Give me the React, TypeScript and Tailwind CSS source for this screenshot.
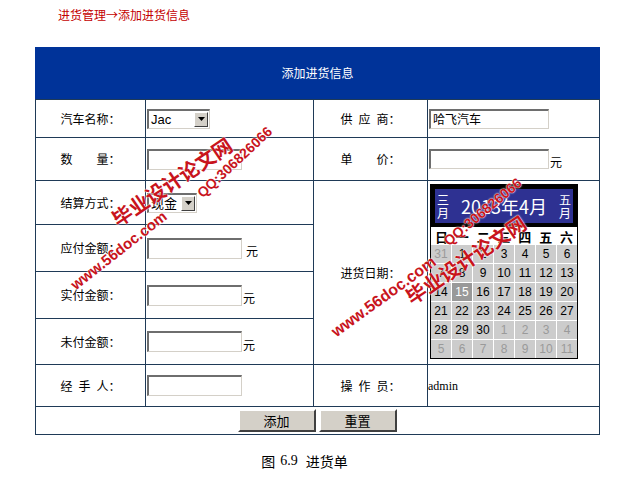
const line = "bg-[#1f3a57]";

function Sunken({ className, children }: { className: string; children?: React.ReactNode }) {
  return (
    <div
      className={
        "flex items-center bg-white border-t-2 border-l-2 border-b border-r border-t-[#6e6e6e] border-l-[#6e6e6e] border-b-[#d4d0c8] border-r-[#d4d0c8] " +
        className
      }
    >
      {children}
    </div>
  );
}

function FakeSelect({ value, className }: { value: string; className: string }) {
  return (
    <Sunken className={"justify-between pr-px " + className}>
      <span className="pl-[2px] text-[13px] leading-none font-['Liberation_Sans','Noto_Sans_CJK_SC',sans-serif]">{value}</span>
      <span className="flex h-[15px] w-[14px] items-center justify-center border border-t-white border-l-white border-b-[#404040] border-r-[#404040] bg-[#d4d0c8]">
        <svg width="7" height="4" viewBox="0 0 7 4">
          <polygon points="0,0 7,0 3.5,4" fill="#000" />
        </svg>
      </span>
    </Sunken>
  );
}

function Label({ text, className = "" }: { text: string; className?: string }) {
  return (
    <div className={"flex items-center justify-center bg-white text-[12px] text-black whitespace-pre " + className}>
      {text}
    </div>
  );
}

const weeks: [number, boolean][][] = [
  [[31, false], [1, true], [2, true], [3, true], [4, true], [5, true], [6, true]],
  [[7, true], [8, true], [9, true], [10, true], [11, true], [12, true], [13, true]],
  [[14, true], [15, true], [16, true], [17, true], [18, true], [19, true], [20, true]],
  [[21, true], [22, true], [23, true], [24, true], [25, true], [26, true], [27, true]],
  [[28, true], [29, true], [30, true], [1, false], [2, false], [3, false], [4, false]],
  [[5, false], [6, false], [7, false], [8, false], [9, false], [10, false], [11, false]],
];

function Calendar() {
  return (
    <div className="w-[148px] border border-black bg-white">
      <div className="flex h-[42px] items-center justify-between border-4 border-black bg-[#2e3192] px-[2px] text-white">
        <div className="flex flex-col text-[12px] leading-[13px]">
          <span>三</span>
          <span>月</span>
        </div>
        <span className="text-[18px] leading-none">2013年4月</span>
        <div className="flex flex-col text-[12px] leading-[13px]">
          <span>五</span>
          <span>月</span>
        </div>
      </div>
      <div className="grid h-[18px] grid-cols-7 items-center text-center text-[13px] font-bold leading-none">
        {["日", "一", "二", "三", "四", "五", "六"].map((d) => (
          <span key={d}>{d}</span>
        ))}
      </div>
      <div className="grid grid-cols-7 gap-px bg-white font-['Liberation_Sans',sans-serif] text-[12px]">
        {weeks.flat().map(([n, cur], i) => {
          const sel = cur && n === 15;
          return (
            <div
              key={i}
              className={
                "flex h-[18px] items-center justify-center " +
                (sel ? "bg-[#999999] text-white" : cur ? "bg-[#cccccc] text-black" : "bg-[#cccccc] text-[#9a9a9a]")
              }
            >
              {n}
            </div>
          );
        })}
      </div>
    </div>
  );
}

function Yuan({ gap = false }: { gap?: boolean }) {
  return <span className={"mt-[6px] text-[12px] leading-none " + (gap ? "ml-[4px]" : "ml-px")}>元</span>;
}

export default function App() {
  return (
    <div className="relative h-[481px] w-[629px] overflow-hidden bg-white font-['Noto_Sans_CJK_SC',sans-serif] text-black">
      <div className="h-[47px] pl-[58px] pt-[8px] text-[12px] leading-[14px] text-[#c40000]">进货管理→添加进货信息</div>

      <div className="ml-[35px] w-[565px]">
        <div className="flex h-[52px] items-center justify-center bg-[#003399] text-[12px] text-white">添加进货信息</div>
        <div
          className={
            "grid grid-cols-[109px_167px_113px_171px] grid-rows-[37px_42px_43px_46px_46px_45px_41px_27px] gap-px p-px " + line
          }
        >
          {/* row 1 */}
          <Label text="汽车名称：" />
          <div className="flex items-center bg-white pl-px">
            <FakeSelect value="Jac" className="h-[20px] w-[63px]" />
          </div>
          <Label text={"供\u2002应\u2002商："} />
          <div className="flex items-center bg-white pl-px">
            <Sunken className="h-[20px] w-[120px] pl-[2px] text-[12px]">哈飞汽车</Sunken>
          </div>

          {/* row 2 */}
          <Label text="数　　量：" />
          <div className="flex items-center bg-white pl-px">
            <Sunken className="h-[21px] w-[95px]" />
          </div>
          <Label text="单　　价：" />
          <div className="flex items-center bg-white pl-px">
            <Sunken className="h-[20px] w-[120px]" />
            <Yuan />
          </div>

          {/* row 3 */}
          <Label text="结算方式：" />
          <div className="flex items-center bg-white pl-px">
            <FakeSelect value="现金" className="h-[20px] w-[50px]" />
          </div>
          <Label text="进货日期：" className="row-span-4" />
          <div className="row-span-4 bg-white pl-[2px] pt-[3px]">
            <Calendar />
          </div>

          {/* row 4 */}
          <Label text="应付金额：" />
          <div className="flex items-center bg-white pl-px">
            <Sunken className="h-[21px] w-[95px]" />
            <Yuan gap />
          </div>

          {/* row 5 */}
          <Label text="实付金额：" />
          <div className="flex items-center bg-white pl-px">
            <Sunken className="h-[21px] w-[95px]" />
            <Yuan />
          </div>

          {/* row 6 */}
          <Label text="未付金额：" />
          <div className="flex items-center bg-white pl-px">
            <Sunken className="h-[21px] w-[95px]" />
            <Yuan />
          </div>

          {/* row 7 */}
          <Label text={"经\u2002手\u2002人："} />
          <div className="flex items-center bg-white pl-px">
            <Sunken className="h-[21px] w-[95px]" />
          </div>
          <Label text={"操\u2002作\u2002员："} />
          <div className="flex items-center bg-white font-['Liberation_Serif',serif] text-[12px]">admin</div>

          {/* row 8 */}
          <div className="col-span-4 flex items-center justify-center gap-[3px] bg-white pr-[1px]">
            <button className="h-[23px] w-[78px] border-2 border-t-white border-l-white border-b-[#404040] border-r-[#404040] bg-[#d4d0c8] text-[13px] leading-none">
              添加
            </button>
            <button className="h-[23px] w-[78px] border-2 border-t-white border-l-white border-b-[#404040] border-r-[#404040] bg-[#d4d0c8] text-[13px] leading-none">
              重置
            </button>
          </div>
        </div>
      </div>

      <div className="mt-[18px] flex justify-center pr-[20px] text-[14px] leading-[16px]">
        <span>图</span>
        <span className="ml-[5px] font-['Liberation_Serif',serif]">6.9</span>
        <span className="ml-[8px]">进货单</span>
      </div>

      {/* watermark stamps */}
      <div className="pointer-events-none absolute inset-0 font-['Liberation_Sans','Noto_Sans_CJK_SC',sans-serif] font-bold text-[#c8141c] [text-shadow:0_0_2px_#fff,0_0_1px_#fff]">
        <span className="absolute left-[77px] top-[277px] origin-bottom-left -rotate-[38deg] whitespace-nowrap text-[15px] leading-none">www.56doc.com</span>
        <span className="absolute left-[120px] top-[210px] origin-bottom-left -rotate-[34deg] whitespace-nowrap text-[20px] leading-none">毕业设计论文网</span>
        <span className="absolute left-[204px] top-[186px] origin-bottom-left -rotate-[43deg] whitespace-nowrap text-[14px] leading-none">QQ:306826066</span>
        <span className="absolute left-[338px] top-[324px] origin-bottom-left -rotate-[36deg] whitespace-nowrap text-[16px] leading-none">www.56doc.com</span>
        <span className="absolute left-[414px] top-[288px] origin-bottom-left -rotate-[34deg] whitespace-nowrap text-[20px] leading-none">毕业设计论文网</span>
        <span className="absolute left-[450px] top-[234px] origin-bottom-left -rotate-[40deg] whitespace-nowrap text-[14px] leading-none">QQ:306826066</span>
      </div>
    </div>
  );
}
